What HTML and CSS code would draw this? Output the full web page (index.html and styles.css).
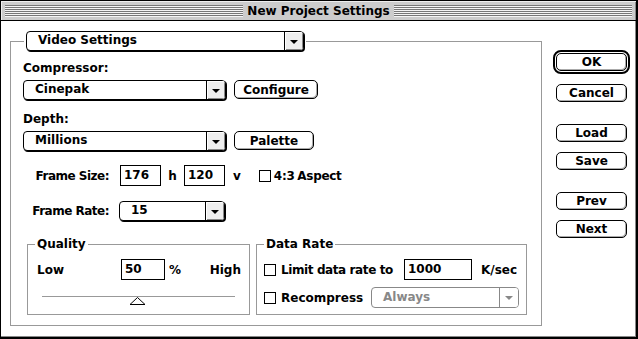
FILE: index.html
```html
<!DOCTYPE html>
<html>
<head>
    <title>New Project Settings</title>
    <link rel="stylesheet" href="styles.css">
</head>
<body>
    <div class="window">
        <div class="titlebar">
            <div class="stripes"></div>
            <div class="title">New Project Settings</div>
            <div class="stripes"></div>
        </div>

        <div class="content">
            <fieldset class="main-group">
                <legend class="main-legend">
                    <div class="popup popup-section">
                        <span class="popup-label">Video Settings</span>
                        <span class="popup-arrow"><span class="tri"></span></span>
                    </div>
                </legend>

                <div class="field-label first">Compressor:</div>
                <div class="popup-row">
                    <div class="popup popup-wide">
                        <span class="popup-label">Cinepak</span>
                        <span class="popup-arrow"><span class="tri"></span></span>
                    </div>
                    <button class="btn btn-configure">Configure</button>
                </div>

                <div class="field-label">Depth:</div>
                <div class="popup-row">
                    <div class="popup popup-wide">
                        <span class="popup-label">Millions</span>
                        <span class="popup-arrow"><span class="tri"></span></span>
                    </div>
                    <button class="btn btn-palette">Palette</button>
                </div>

                <div class="size-row">
                    <span class="row-label">Frame Size:</span>
                    <span class="text-box size-box">176</span>
                    <span class="unit-h">h</span>
                    <span class="text-box size-box">120</span>
                    <span class="unit-v">v</span>
                    <span class="check"></span>
                    <span class="aspect">4:3 Aspect</span>
                </div>

                <div class="rate-row">
                    <span class="row-label">Frame Rate:</span>
                    <div class="popup popup-rate">
                        <span class="popup-label">15</span>
                        <span class="popup-arrow"><span class="tri"></span></span>
                    </div>
                </div>

                <div class="bottom-row">
                    <fieldset class="sub-group quality">
                        <legend>Quality</legend>
                        <div class="quality-row">
                            <span class="low">Low</span>
                            <span class="text-box quality-box">50</span>
                            <span class="pct">%</span>
                            <span class="high">High</span>
                        </div>
                        <div class="slider">
                            <div class="slider-line"></div>
                            <svg class="thumb" width="17" height="8" viewBox="0 0 17 8">
                                <polygon points="8.5,0.5 16,7.5 1,7.5" fill="#fff" stroke="#000" stroke-width="1"/>
                            </svg>
                        </div>
                    </fieldset>

                    <fieldset class="sub-group datarate">
                        <legend>Data Rate</legend>
                        <div class="limit-row">
                            <span class="check"></span>
                            <span class="limit-label">Limit data rate to</span>
                            <span class="text-box rate-box">1000</span>
                            <span class="ksec">K/sec</span>
                        </div>
                        <div class="recompress-row">
                            <span class="check"></span>
                            <span class="limit-label">Recompress</span>
                            <div class="popup popup-disabled">
                                <span class="popup-label">Always</span>
                                <span class="popup-arrow"><span class="tri"></span></span>
                            </div>
                        </div>
                    </fieldset>
                </div>
            </fieldset>

            <div class="side">
                <div class="default-ring"><button class="btn btn-side">OK</button></div>
                <button class="btn btn-side cancel">Cancel</button>
                <button class="btn btn-side spaced">Load</button>
                <button class="btn btn-side">Save</button>
                <button class="btn btn-side spaced">Prev</button>
                <button class="btn btn-side">Next</button>
            </div>
        </div>
    </div>
</body>
</html>
```

FILE: styles.css
```css
body {
    margin: 0;
    font-family: "DejaVu Sans", sans-serif;
    font-size: 12px;
    font-weight: bold;
    color: #000;
    white-space: nowrap;
}
.window {
    width: 638px;
    height: 339px;
    box-sizing: border-box;
    border: 1px solid #000;
    border-right-width: 2px;
    border-bottom-width: 2px;
    display: flex;
    flex-direction: column;
    background: #fff;
}
.titlebar {
    height: 20px;
    box-sizing: border-box;
    background: #cccccc;
    border-bottom: 1px solid #000;
    box-shadow: inset 1px 1px 0 #eeeeee, inset -1px 0 0 #888;
    display: flex;
    align-items: center;
    padding: 0 4px 0 4px;
    gap: 4px;
}
.stripes {
    flex: 1;
    height: 12px;
    background: repeating-linear-gradient(to bottom, #777 0 1px, #f4f4f4 1px 2px);
}
.title {
    line-height: 16px;
}
.content {
    flex: 1;
    display: flex;
    padding: 10px 0 0 9px;
    border-right: 1px solid #888;
    border-bottom: 1px solid #888;
}
.main-group {
    width: 532px;
    height: 295px;
    box-sizing: border-box;
    margin: 0;
    padding: 0 12px;
    border: 1px solid #999;
}
.main-legend {
    margin-left: 1px;
    padding: 0 2px;
}

/* popup menus */
.popup {
    display: flex;
    height: 20px;
    box-sizing: border-box;
    border: 1px solid #000;
    border-radius: 4px;
    box-shadow: 1px 1px 0 #000;
    background: #fff;
    overflow: hidden;
    flex-shrink: 0;
}
.popup-label {
    flex: 1;
    padding-left: 11px;
    line-height: 17px;
}
.popup-arrow {
    width: 18px;
    border-left: 1px solid #000;
    background: #eeeeee;
    box-shadow: inset 1px 1px 0 #fff, inset -1px -1px 0 #888;
    display: flex;
    align-items: center;
    justify-content: center;
}
.tri {
    width: 0;
    height: 0;
    border-left: 4px solid transparent;
    border-right: 4px solid transparent;
    border-top: 4px solid #000;
    margin-top: 1px;
}
.popup-section {
    width: 278px;
}
.popup-wide {
    width: 203px;
}
.popup-rate {
    width: 106px;
}
.popup-disabled {
    width: 148px;
    height: 21px;
    border-color: #888;
    box-shadow: none;
    color: #888;
}
.popup-disabled .popup-label {
    line-height: 18px;
}
.popup-disabled .popup-arrow {
    border-left-color: #888;
    background: #fff;
    box-shadow: none;
}
.popup-disabled .tri {
    border-top-color: #888;
}

/* buttons */
.btn {
    font-family: inherit;
    font-size: 12px;
    font-weight: bold;
    color: #000;
    background: #fff;
    border: 1px solid #000;
    border-radius: 5px;
    box-shadow: inset -1px -1px 0 #aaa;
    padding: 0;
    height: 19px;
    line-height: 16px;
}
.btn-configure {
    width: 84px;
}
.btn-palette {
    width: 80px;
}
.field-label {
    line-height: 16px;
    margin-top: 11px;
}
.field-label.first {
    margin-top: 9px;
}
.popup-row {
    display: flex;
    align-items: flex-start;
    gap: 8px;
    margin-top: 4px;
}

/* frame size / rate */
.size-row,
.rate-row {
    display: flex;
    align-items: center;
}
.size-row {
    margin-top: 14px;
}
.rate-row {
    margin-top: 15px;
}
.row-label {
    width: 86px;
    text-align: right;
    margin-right: 11px;
    letter-spacing: -0.5px;
}
.text-box {
    display: inline-block;
    box-sizing: border-box;
    height: 21px;
    border: 1px solid #000;
    padding-left: 3px;
    line-height: 18px;
    flex-shrink: 0;
}
.size-box {
    width: 41px;
}
.unit-h {
    width: 23px;
    text-align: center;
}
.unit-v {
    margin-left: 8px;
    margin-right: 18px;
}
.check {
    display: inline-block;
    width: 12px;
    height: 12px;
    box-sizing: border-box;
    border: 1px solid #000;
    background: #fff;
    flex-shrink: 0;
}
.aspect {
    margin-left: 3px;
    word-spacing: -1px;
    letter-spacing: -0.3px;
}
.rate-row .row-label {
    margin-right: 10px;
}

/* group boxes */
.bottom-row {
    display: flex;
    gap: 6px;
    margin: 15px 0 0 4px;
}
.sub-group {
    margin: 0;
    padding: 0 7px;
    border: 1px solid #999;
    box-sizing: border-box;
    height: 79px;
}
.sub-group legend {
    padding: 0 2px;
    margin-left: 0;
    line-height: 16px;
}
.quality {
    width: 223px;
}
.datarate {
    width: 269px;
}
.quality-row {
    display: flex;
    align-items: center;
    margin-top: 7px;
}
.low {
    width: 84px;
    margin-left: 2px;
}
.quality-box {
    width: 44px;
}
.pct {
    margin-left: 4px;
    flex: 1;
}
.high {
    margin-right: 1px;
}
.slider {
    position: relative;
    margin: 16px 7px 0 7px;
    height: 10px;
}
.slider-line {
    height: 1px;
    background: #999;
}
.thumb {
    position: absolute;
    left: 87px;
    top: 1px;
}
.limit-row,
.recompress-row {
    display: flex;
    align-items: center;
}
.limit-row {
    margin-top: 7px;
}
.recompress-row {
    margin-top: 7px;
}
.limit-label {
    margin-left: 5px;
}
.limit-row .limit-label {
    width: 123px;
    letter-spacing: -0.4px;
}
.recompress-row .limit-label {
    width: 90px;
}
.rate-box {
    width: 68px;
}
.ksec {
    margin-left: 9px;
}

/* right column */
.side {
    display: flex;
    flex-direction: column;
    align-items: center;
    width: 77px;
    margin-left: 11px;
    padding-top: 19px;
}
.default-ring {
    border: 2px solid #000;
    border-radius: 8px;
    padding: 1px;
    display: flex;
}
.btn-side {
    width: 71px;
    height: 18px;
    line-height: 15px;
}
.cancel {
    margin-top: 10px;
}
.btn-side + .btn-side {
    margin-top: 10px;
}
.btn-side.spaced {
    margin-top: 22px;
}
```
